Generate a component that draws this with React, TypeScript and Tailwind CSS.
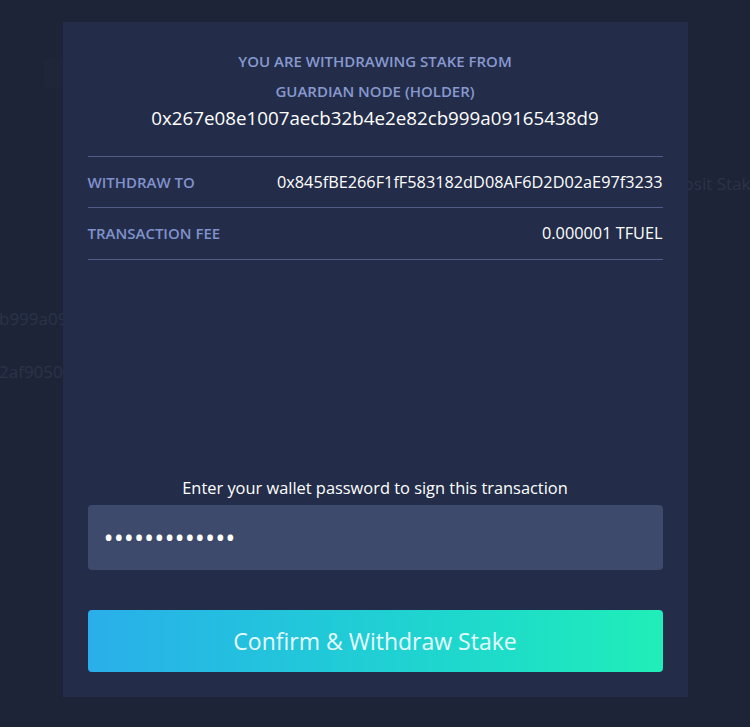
import { useState } from 'react';

type DetailRow = {
  label: string;
  value: string;
};

const rows: DetailRow[] = [
  { label: 'Withdraw To', value: '0x845fBE266F1fF583182dD08AF6D2D02aE97f3233' },
  { label: 'Transaction Fee', value: '0.000001 TFUEL' },
];

function BackgroundPage() {
  // faded page behind the overlay
  return (
    <div className="h-[727px] w-full overflow-hidden bg-[#1d2438] text-[#2b3349]">
      <div className="flex h-[150px] items-start pl-[44px] pt-[58px]">
        <div className="h-[30px] w-[18px] rounded-sm bg-[#1f263a]" />
      </div>
      <div className="-mr-[10px] flex justify-end pt-[21px] text-[17px]">
        <span>Deposit Stake</span>
      </div>
      <div className="-ml-[1px] pt-[110px] text-[17px] leading-[24px]">b999a09165438d9</div>
      <div className="-ml-[1px] pt-[29px] text-[17px] leading-[24px]">2af9050c3b8e71</div>
    </div>
  );
}

function WithdrawModal() {
  const [password, setPassword] = useState('1234567890123');

  return (
    <div className="flex h-[675px] w-[625px] flex-col bg-[#232d49] px-[25px] pb-[25px] pt-[24px]">
      <div className="text-center">
        <div className="text-[15px] font-semibold uppercase leading-[30px] text-[#8899d0]">
          You are withdrawing stake from
        </div>
        <div className="text-[15px] font-semibold uppercase leading-[30px] text-[#8899d0]">
          Guardian Node (Holder)
        </div>
        <div className="text-[18.75px] leading-[24px] text-white">
          0x267e08e1007aecb32b4e2e82cb999a09165438d9
        </div>
      </div>

      <div className="mt-[26px] divide-y divide-[#515e87] border-y border-[#515e87]">
        {rows.map((r) => (
          <div key={r.label} className="flex h-[51px] items-center justify-between">
            <span className="text-[15px] font-semibold uppercase text-[#8092cc]">{r.label}</span>
            <span className="text-[16.3px] text-white">{r.value}</span>
          </div>
        ))}
      </div>

      <div className="mt-auto flex flex-col">
        <label className="text-center text-[16.4px] font-medium leading-[22px] text-white">
          Enter your wallet password to sign this transaction
        </label>
        <input
          type="password"
          value={password}
          onChange={(e) => setPassword(e.target.value)}
          className="mt-[6px] h-[65px] w-full rounded-[4px] bg-[#3e4a6b] px-[16px] text-[27px] text-white outline-none"
        />
        <button className="mt-[40px] h-[62px] w-full rounded-[4px] bg-gradient-to-r from-[#2aaeea] to-[#20eeb8] text-[23px] font-medium text-[#e6fbff]">
          Confirm &amp; Withdraw Stake
        </button>
      </div>
    </div>
  );
}

export default function App() {
  return (
    <div className="relative h-[727px] w-full overflow-hidden font-['Open_Sans',sans-serif]">
      <BackgroundPage />
      <div className="absolute inset-0 flex justify-center pt-[22px]">
        <WithdrawModal />
      </div>
    </div>
  );
}
